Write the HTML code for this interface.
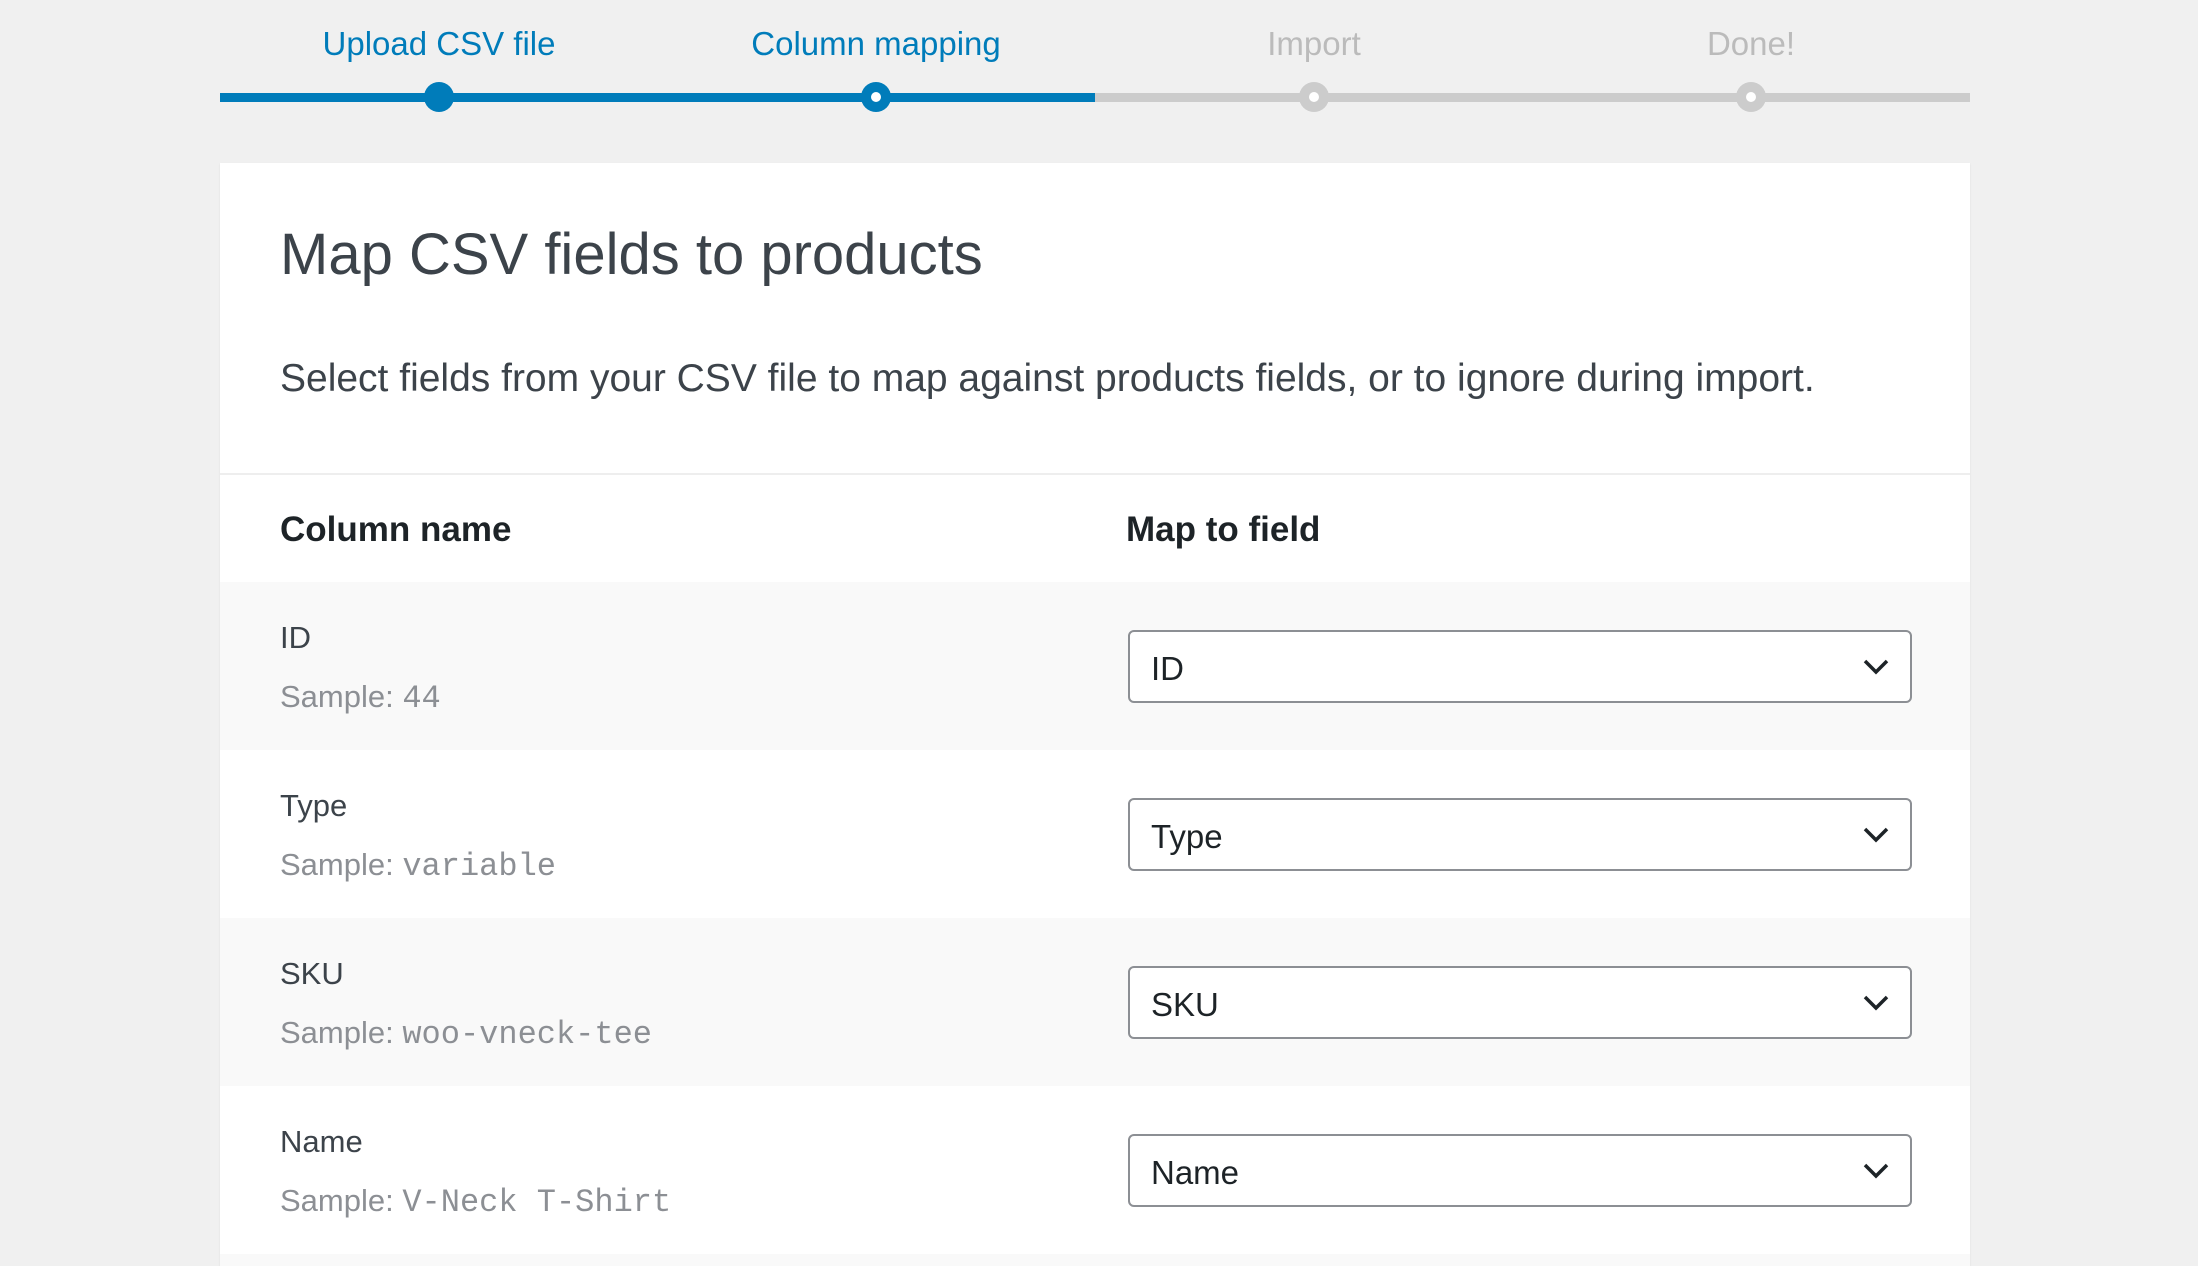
<!DOCTYPE html>
<html><head><meta charset="utf-8"><style>
*{margin:0;padding:0;box-sizing:border-box}
html{overflow:hidden;width:2198px;height:1266px}
body{width:2198px;height:1266px;background:#f0f0f0;font-family:"Liberation Sans",sans-serif;position:relative;overflow:hidden;color:#3c434a}
.lbl{position:absolute;top:25px;font-size:33px;transform:translateX(-50%);white-space:nowrap}
.line{position:absolute;top:93px;height:9px}
.dot{position:absolute;top:82px;width:30px;height:30px;border-radius:50%;margin-left:-15px}
.card{position:absolute;left:220px;top:163px;width:1750px;height:1103px;background:#fff;box-shadow:0 1px 2px rgba(0,0,0,.08);overflow:hidden}
.row{position:absolute;left:0;width:1750px;height:168px}
.row .n{position:absolute;left:60px;top:38px;font-size:31px;color:#3c434a}
.row .s{position:absolute;left:60px;top:97px;font-size:31px;color:#8c8f94}
.row .s code{font-family:"Liberation Mono",monospace;font-size:32px}
.sel{position:absolute;left:908px;top:48px;width:784px;height:73px;border:2px solid #8c8f94;border-radius:6px;background:#fff;font-size:33px;color:#1d2327;padding:18px 0 0 21px}
.sel svg{position:absolute;right:20px;top:26px}
</style></head><body>
<div class="lbl" style="left:439px;color:#007cba">Upload CSV file</div>
<div class="lbl" style="left:876px;color:#007cba">Column mapping</div>
<div class="lbl" style="left:1314px;color:#bbb">Import</div>
<div class="lbl" style="left:1751px;color:#bbb">Done!</div>
<div class="line" style="left:220px;width:875px;background:#007cba"></div>
<div class="line" style="left:1095px;width:875px;background:#ccc"></div>
<div class="dot" style="left:439px;background:#007cba"></div>
<div class="dot" style="left:876px;background:#007cba"><div style="width:10px;height:10px;background:#fff;border-radius:50%;margin:10px"></div></div>
<div class="dot" style="left:1314px;background:#ccc"><div style="width:10px;height:10px;background:#fff;border-radius:50%;margin:10px"></div></div>
<div class="dot" style="left:1751px;background:#ccc"><div style="width:10px;height:10px;background:#fff;border-radius:50%;margin:10px"></div></div>
<div class="card">
<div style="position:absolute;left:60px;top:58px;font-size:58px;color:#3c434a;white-space:nowrap">Map CSV fields to products</div>
<div style="position:absolute;left:60px;top:194px;font-size:39px;color:#3c434a;white-space:nowrap">Select fields from your CSV file to map against products fields, or to ignore during import.</div>
<div style="position:absolute;left:0;top:310px;width:1750px;height:2px;background:#eee"></div>
<div style="position:absolute;left:60px;top:347px;font-size:35px;font-weight:bold;color:#1d2327">Column name</div>
<div style="position:absolute;left:906px;top:347px;font-size:35px;font-weight:bold;color:#1d2327">Map to field</div>
<div class="row" style="top:419px;background:#f9f9f9"><div class="n">ID</div><div class="s">Sample: <code>44</code></div><div class="sel">ID<svg width="28" height="18" viewBox="0 0 28 18"><path d="M3 3l11 11 11-11" fill="none" stroke="#1d2327" stroke-width="3.5"/></svg></div></div>
<div class="row" style="top:587px;background:#fff"><div class="n">Type</div><div class="s">Sample: <code>variable</code></div><div class="sel">Type<svg width="28" height="18" viewBox="0 0 28 18"><path d="M3 3l11 11 11-11" fill="none" stroke="#1d2327" stroke-width="3.5"/></svg></div></div>
<div class="row" style="top:755px;background:#f9f9f9"><div class="n">SKU</div><div class="s">Sample: <code>woo-vneck-tee</code></div><div class="sel">SKU<svg width="28" height="18" viewBox="0 0 28 18"><path d="M3 3l11 11 11-11" fill="none" stroke="#1d2327" stroke-width="3.5"/></svg></div></div>
<div class="row" style="top:923px;background:#fff"><div class="n">Name</div><div class="s">Sample: <code>V-Neck T-Shirt</code></div><div class="sel">Name<svg width="28" height="18" viewBox="0 0 28 18"><path d="M3 3l11 11 11-11" fill="none" stroke="#1d2327" stroke-width="3.5"/></svg></div></div>
<div class="row" style="top:1091px;background:#f9f9f9"></div>
</div>
</body></html>
